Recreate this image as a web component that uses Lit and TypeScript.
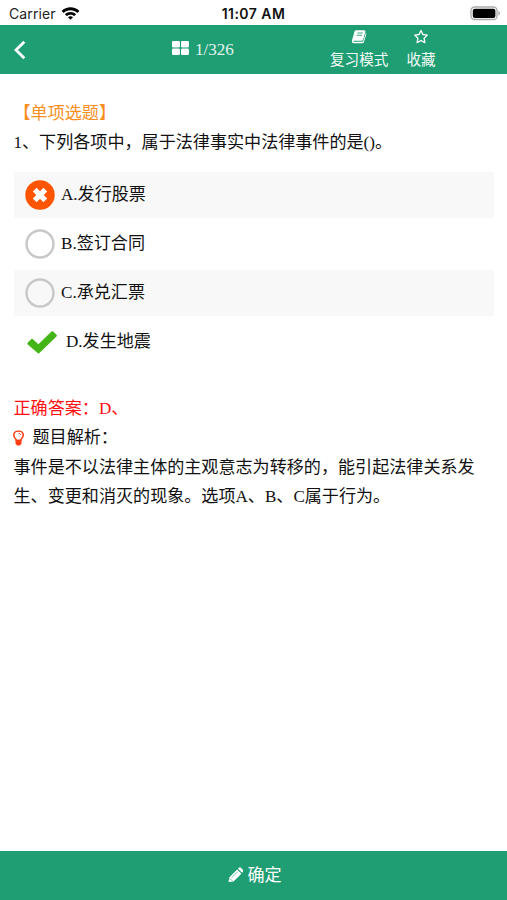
import { LitElement, html, css, svg } from "lit";
import { customElement } from "lit/decorators.js";

const wifi = svg`<path d="M.6 4.9C5.200 0 13.800 0 18.400 4.900L16.400 7C12.500 3.300 6.500 3.300 2.600 7Z"/><path d="M3.900 8.200C7 5.100 12 5.100 15.100 8.200L13 10.200C11.100 8.300 7.900 8.300 6 10.200Z"/><path d="M7 11.300C8.500 9.900 10.500 9.900 12 11.300L9.500 13.800Z"/>`;

type State = "wrong" | "empty" | "right";
const options: { text: string; state: State }[] = [
  { text: "A.发行股票", state: "wrong" },
  { text: "B.签订合同", state: "empty" },
  { text: "C.承兑汇票", state: "empty" },
  { text: "D.发生地震", state: "right" },
];

@customElement("status-bar")
class StatusBar extends LitElement {
  static styles = css`
    :host { display: grid; grid-template-columns: 1fr auto 1fr; align-items: center; height: 25px; box-sizing: border-box; padding: 2px 6px 0 9px; font-family: Inter, "Liberation Sans", sans-serif; font-size: 14px; line-height: 22px; color: #111; }
    .left { display: flex; align-items: center; gap: 5px; }
    .carrier { letter-spacing: 0.1px; color: #222; }
    .time { font-weight: 600; letter-spacing: 0.45px; margin-right: 3px; }
    .wifi { width: 19px; height: 14px; margin-top: -2px; fill: #000; }
    .battery { justify-self: end; width: 31px; height: 15px; }
  `;
  render() {
    return html`
      <div class="left"><span class="carrier">Carrier</span><svg class="wifi" viewBox="0 0 19 14">${wifi}</svg></div>
      <span class="time">11:07 AM</span>
      <svg class="battery" viewBox="0 0 31 15">
        <rect x="1" y="1" width="26" height="12.500" rx="3.600" fill="#fff" stroke="#aaa" stroke-width="1.300"/>
        <rect x="2.800" y="2.700" width="22.600" height="9.200" rx="2" fill="#000"/>
        <path d="M28.500 5v4.600c1.800-.6 1.800-4 0-4.600z" fill="#999"/>
      </svg>`;
  }
}

@customElement("option-row")
class OptionRow extends LitElement {
  static properties = { text: {}, state: {} };
  declare text: string;
  declare state: State;
  static styles = css`
    :host { display: flex; align-items: center; height: 46px; padding-left: 11px; }
    .mark { width: 30px; height: 30px; margin-right: 6px; flex: none; }
    .check { width: 32px; margin: 1px 9px 0 0; }
    .label { margin-top: -1px; white-space: nowrap; }
  `;
  render() {
    const mark =
      this.state === "wrong"
        ? html`<svg class="mark" viewBox="0 0 30 30"><circle cx="15" cy="15" r="14.700" fill="#ff5500"/><path d="M9.700 9.700l10.600 10.600M20.300 9.700l-10.600 10.600" stroke="#fff" stroke-width="5.300"/></svg>`
        : this.state === "empty"
          ? html`<svg class="mark" viewBox="0 0 30 30"><circle cx="15" cy="15" r="13.500" fill="none" stroke="#c8c8c8" stroke-width="2.400"/></svg>`
          : html`<svg class="mark check" viewBox="0 0 32 30"><path d="M2.800 15.600l3.400-3.400q.9-.8 1.800 0l5.400 5L26.500 4.600q.9-.8 1.800 0l3.200 3.100q.8.900 0 1.800L14.400 26.100q-.9.800-1.800 0L2.800 17.400q-.8-.8 0-1.800z" fill="#44b516"/></svg>`;
    return html`${mark}<span class="label">${this.text}</span>`;
  }
}

@customElement("app-root")
class AppRoot extends LitElement {
  static styles = css`
    :host { display: flex; flex-direction: column; height: 900px; background: #fff; color: #111; font-family: "Liberation Serif", "Noto Sans CJK SC", serif; font-size: 17.08px; line-height: 29.4px; }
    .nav { height: 49px; flex: none; background: #1f9e74; color: #fff; display: grid; grid-template-columns: 159px 143px 1fr; }
    .back { width: 14px; height: 20px; margin: 15px 0 0 13px; }
    .counter { display: flex; align-items: center; gap: 6px; padding: 1px 0 0 13px; color: #e3f3ed; }
    .grid { width: 17px; height: 14px; fill: #fff; margin-top: -5px; }
    .actions { display: flex; gap: 18px; padding-left: 28px; font-size: 14.6px; line-height: 20px; }
    .action { display: flex; flex-direction: column; align-items: center; padding-top: 4px; color: #f2faf7; }
    .action svg { width: 16px; height: 15px; margin-bottom: 6px; }
    .content { flex: 1; padding: 25px 13px 0 13.5px; }
    .kind { color: #f78f1e; }
    .options { display: flex; flex-direction: column; gap: 3px; margin: 14px 0 0 .5px; }
    .striped { background: #f8f8f8; }
    .answer { margin-top: 29px; color: #f11; }
    .analysis { display: flex; align-items: center; gap: 8.500px; }
    .bulb { width: 11px; height: 16px; margin-left: -.5px; }
    .explain { white-space: nowrap; }
    .submit { height: 49px; flex: none; display: flex; align-items: center; justify-content: center; gap: 4px; background: #1f9e74; color: #fff; padding-left: 3px; box-sizing: border-box; }
    .pencil { width: 15px; height: 16px; margin-top: -1px; }
  `;
  render() {
    return html`
      <status-bar></status-bar>
      <div class="nav">
        <svg class="back" viewBox="0 0 14 20"><path d="M11.300 1.700L3 10l8.300 8.300" fill="none" stroke="#fff" stroke-width="2.800"/></svg>
        <div class="counter">
          <svg class="grid" viewBox="0 0 17 14"><rect x="0" y="0" width="7.900" height="6.400" rx="1.200"/><rect x="9" y="0" width="7.900" height="6.400" rx="1.200"/><rect x="0" y="7.500" width="7.900" height="6.400" rx="1.200"/><rect x="9" y="7.500" width="7.900" height="6.400" rx="1.200"/></svg>
          <span>1/326</span>
        </div>
        <div class="actions">
          <div class="action">
            <svg viewBox="0 0 16 15"><path d="M5.200 1.200h8.100q1.500 0 1.100 1.500l-2.300 8q-.3 1-1.300 1H3.200q-1 0-.8.600.2.500.9.500h8.100q.7 0 1-.8l2.400-8q.8.500.5 1.300L13 12.900q-.4 1.300-1.700 1.300H3.100Q.6 14.200.9 11.700L3.500 2.600Q4 1.200 5.200 1.200z" fill="#fff"/><path d="M6.400 4h5.300M5.700 6.300H11" stroke="#1f9e74" stroke-width=".9"/></svg>
            <span>复习模式</span>
          </div>
          <div class="action">
            <svg viewBox="0 0 16 15"><path d="M8 1.500l1.900 4 4.400.6-3.200 3.100.8 4.400L8 11.500l-3.900 2.100.8-4.400L1.700 6.100l4.400-.6z" fill="none" stroke="#fff" stroke-width="1.300" stroke-linejoin="round"/></svg>
            <span>收藏</span>
          </div>
        </div>
      </div>
      <div class="content">
        <div class="kind">【单项选题】</div>
        <div>1、下列各项中，属于法律事实中法律事件的是()。</div>
        <div class="options">
          ${options.map((o, i) => html`<option-row class=${i % 2 ? "" : "striped"} .text=${o.text} .state=${o.state}></option-row>`)}
        </div>
        <div class="answer">正确答案：D、</div>
        <div class="analysis">
          <svg class="bulb" viewBox="0 0 10 16" preserveAspectRatio="none"><path d="M3 10.500C2.900 8.600.7 8 .7 5.200.7 2.600 2.600 1.100 5 1.100s4.300 1.500 4.300 4.100C9.300 8 7.100 8.600 7 10.500z" fill="none" stroke="#ff3c14" stroke-width="1.400"/><path d="M2.300 9.800h5.400v4L6.200 15.400H3.800L2.300 13.800z" fill="#ff3c14"/><path d="M5 3.300q1.700 0 2 1.700" fill="none" stroke="#ff3c14" stroke-width=".8"/></svg>
          <span>题目解析：</span>
        </div>
        <div class="explain">事件是不以法律主体的主观意志为转移的，能引起法律关系发<br>生、变更和消灭的现象。选项A、B、C属于行为。</div>
      </div>
      <div class="submit">
        <svg class="pencil" viewBox="0 0 15 16"><path d="M.5 15l.9-4.800L9.200 2.500l4.200 4.200-7.900 7.800zM10 1.700l.9-.9q1-.9 2 0l2 2q.9 1 0 2l-.8.900z" fill="#fff"/><path d="M3.800 10.500l5.600-5.600M1.800 11.300l2.600 2.600" stroke="#1f9e74" stroke-width=".6"/></svg>
        <span>确定</span>
      </div>`;
  }
}
